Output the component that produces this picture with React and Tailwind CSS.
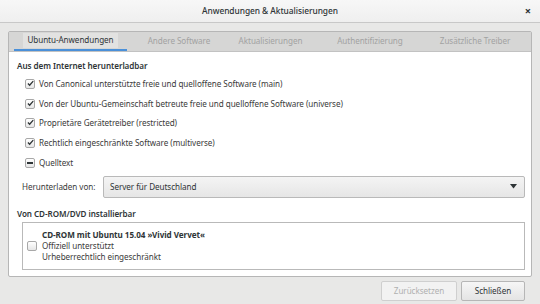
import React from "react";

const tabs = [
  { label: "Ubuntu-Anwendungen", w: "w-[113px]", active: true },
  { label: "Andere Software", w: "w-[104px]" },
  { label: "Aktualisierungen", w: "w-[79px]" },
  { label: "Authentifizierung", w: "w-[120px]" },
  { label: "Zusätzliche Treiber", w: "w-[90px]" },
];

const sources = [
  { label: "Von Canonical unterstützte freie und quelloffene Software (main)", state: "on" },
  { label: "Von der Ubuntu-Gemeinschaft betreute freie und quelloffene Software (universe)", state: "on" },
  { label: "Proprietäre Gerätetreiber (restricted)", state: "on" },
  { label: "Rechtlich eingeschränkte Software (multiverse)", state: "on" },
  { label: "Quelltext", state: "mixed" },
];

function Check({ state }) {
  return (
    <span className="w-[10px] h-[10px] rounded-[2px] border border-[#a8a8a8] bg-gradient-to-b from-white to-[#e6e6e6] flex items-center justify-center shrink-0">
      {state === "on" && (
        <svg width="9" height="9" viewBox="0 0 9 9" className="-mt-[1px] ml-[1px]">
          <path d="M1.2 4.6 L3.4 6.8 L8 1.4" fill="none" stroke="#2e3436" strokeWidth="1.7" />
        </svg>
      )}
      {state === "mixed" && <span className="w-[6px] h-[2px] bg-[#2e3436]" />}
    </span>
  );
}

export default function App() {
  return (
    <div className="w-[540px] h-[304px] bg-[#e8e8e7] flex flex-col overflow-hidden text-[#3a3a3a] font-['Noto_Sans',sans-serif] text-[8.1px] tracking-[-0.05px] leading-none">
      {/* title bar */}
      <div className="h-[23px] shrink-0 bg-gradient-to-b from-[#f7f7f7] to-[#efefef] border-b border-[#c8c8c8] flex items-center justify-center relative">
        <span className="text-[8.4px] font-medium text-[#2e3436]">Anwendungen &amp; Aktualisierungen</span>
        <span className="absolute right-[9px] top-[5px] text-[11px] font-bold text-[#2e3436]">×</span>
      </div>

      {/* notebook */}
      <div className="px-[8px] pt-[8px]">
        <div className="h-[246px] border border-[#b6b6b6] rounded-[2px] flex flex-col bg-white">
          <div className="h-[20px] shrink-0 bg-[#d6d6d5] border-b border-[#c2c2c2] flex pl-[5px]">
            {tabs.map((t) => (
              <div
                key={t.label}
                className={`${t.w} h-full flex items-center justify-center ${
                  t.active ? "border-b-[2px] border-[#4a90d9] text-[#2e3436]" : "text-[#a2a2a2]"
                }`}
              >
                <span className={t.active ? "bg-[#e2e2e1] px-[4px] py-[3px]" : ""}>{t.label}</span>
              </div>
            ))}
          </div>

          <div className="flex-1 flex flex-col px-[8px]">
            <div className="font-semibold text-[#2e3436] mt-[10px]">Aus dem Internet herunterladbar</div>
            <div className="flex flex-col gap-[9.7px] mt-[9px] pl-[8px]">
              {sources.map((s) => (
                <div key={s.label} className="flex items-center gap-[4px]">
                  <Check state={s.state} />
                  <span>{s.label}</span>
                </div>
              ))}
            </div>

            <div className="flex items-center mt-[8px] pl-[5px]">
              <span className="w-[81px]">Herunterladen von:</span>
              <div className="flex-1 h-[22px] mr-[-2px] border border-[#b9b9b9] rounded-[2px] bg-gradient-to-b from-[#f4f4f4] to-[#e6e6e6] flex items-center justify-between pl-[6px] pr-[7px]">
                <span className="text-[#2e3436]">Server für Deutschland</span>
                <svg width="7" height="5" viewBox="0 0 7 5">
                  <path d="M0 0 H7 L3.5 4.5 Z" fill="#2e3436" />
                </svg>
              </div>
            </div>

            <div className="font-semibold text-[#2e3436] mt-[12px]">Von CD-ROM/DVD installierbar</div>
            <div className="mt-[4px] ml-[5px] mr-[-2px] h-[48px] border border-[#b9b9b9] flex items-center pl-[4px]">
              <Check state="off" />
              <div className="flex flex-col gap-[3px] ml-[5px]">
                <span className="font-bold text-[#2e3436]">CD-ROM mit Ubuntu 15.04 »Vivid Vervet«</span>
                <span>Offiziell unterstützt</span>
                <span>Urheberrechtlich eingeschränkt</span>
              </div>
            </div>
          </div>
        </div>
      </div>

      {/* buttons */}
      <div className="flex justify-end gap-[4px] pr-[15px] pt-[4px]">
        <div className="w-[76px] h-[20px] border border-[#cfcfcf] rounded-[2px] bg-[#f2f2f2] flex items-center justify-center text-[#b0b0b0]">
          Zurücksetzen
        </div>
        <div className="w-[64px] h-[20px] border border-[#b6b6b6] rounded-[2px] bg-gradient-to-b from-[#f6f6f6] to-[#e4e4e4] flex items-center justify-center text-[#2e3436]">
          Schließen
        </div>
      </div>
    </div>
  );
}
